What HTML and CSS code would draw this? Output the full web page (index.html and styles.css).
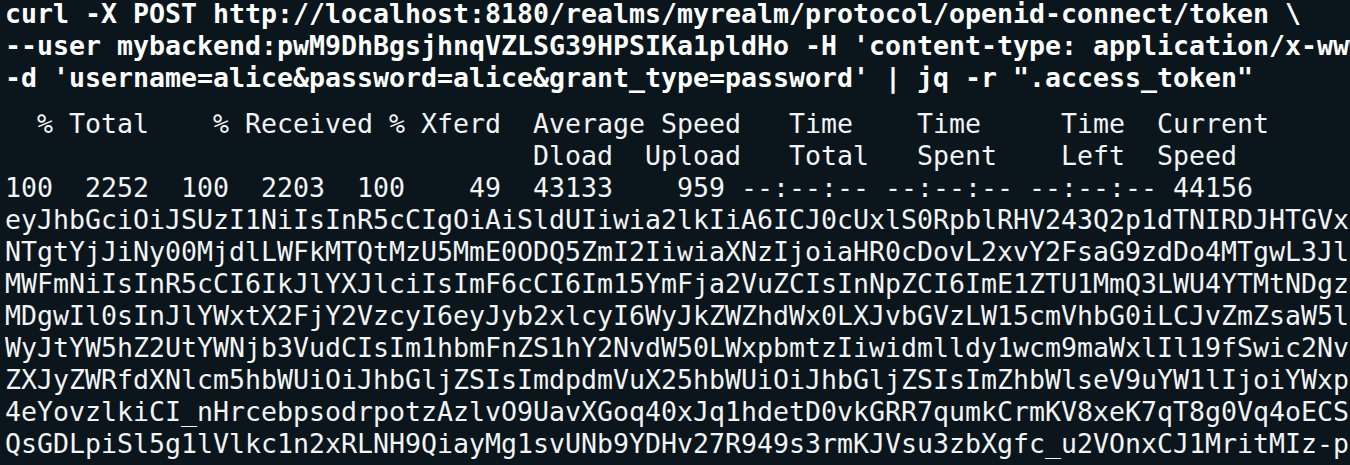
FILE: index.html
```html
<!DOCTYPE html>
<html>
<head>
<meta charset="utf-8">
<link rel="stylesheet" href="styles.css">
</head>
<body>
<main class="term">
<section class="cmd">
<div class="line">curl -X POST http://localhost:8180/realms/myrealm/protocol/openid-connect/token \</div>
<div class="line">--user mybackend:pwM9DhBgsjhnqVZLSG39HPSIKa1pldHo -H 'content-type: application/x-www-form-urlencoded' \</div>
<div class="line">-d 'username=alice&amp;password=alice&amp;grant_type=password' | jq -r ".access_token"</div>
</section>
<section class="out">
<div class="line">  % Total    % Received % Xferd  Average Speed   Time    Time     Time  Current</div>
<div class="line">                                 Dload  Upload   Total   Spent    Left  Speed</div>
<div class="line">100  2252  100  2203  100    49  43133    959 --:--:-- --:--:-- --:--:-- 44156</div>
<div class="line">eyJhbGciOiJSUzI1NiIsInR5cCIgOiAiSldUIiwia2lkIiA6ICJ0cUxlS0RpblRHV243Q2p1dTNIRDJHTGVx</div>
<div class="line">NTgtYjJiNy00MjdlLWFkMTQtMzU5MmE0ODQ5ZmI2IiwiaXNzIjoiaHR0cDovL2xvY2FsaG9zdDo4MTgwL3Jl</div>
<div class="line">MWFmNiIsInR5cCI6IkJlYXJlciIsImF6cCI6Im15YmFja2VuZCIsInNpZCI6ImE1ZTU1MmQ3LWU4YTMtNDgz</div>
<div class="line">MDgwIl0sInJlYWxtX2FjY2VzcyI6eyJyb2xlcyI6WyJkZWZhdWx0LXJvbGVzLW15cmVhbG0iLCJvZmZsaW5l</div>
<div class="line">WyJtYW5hZ2UtYWNjb3VudCIsIm1hbmFnZS1hY2NvdW50LWxpbmtzIiwidmlldy1wcm9maWxlIl19fSwic2Nv</div>
<div class="line">ZXJyZWRfdXNlcm5hbWUiOiJhbGljZSIsImdpdmVuX25hbWUiOiJhbGljZSIsImZhbWlseV9uYW1lIjoiYWxp</div>
<div class="line">4eYovzlkiCI_nHrcebpsodrpotzAzlvO9UavXGoq40xJq1hdetD0vkGRR7qumkCrmKV8xeK7qT8g0Vq4oECS</div>
<div class="line">QsGDLpiSl5g1lVlkc1n2xRLNH9QiayMg1svUNb9YDHv27R949s3rmKJVsu3zbXgfc_u2VOnxCJ1MritMIz-p</div>
</section>
</main>
</body>
</html>
```
FILE: styles.css
```css
html, body {
  margin: 0;
  padding: 0;
  background: #0a161c;
  height: 100%;
  overflow: hidden;
}

.term {
  padding-left: 5px;
  margin-top: -2px;
  font-family: "DejaVu Sans Mono", monospace;
  font-size: 26.58px;
  line-height: 32px;
  color: #ffffff;
  width: 1345px;
  overflow: hidden;
}

.line {
  white-space: pre;
  overflow: hidden;
  height: 32px;
}

.cmd {
  font-weight: bold;
  margin-bottom: 14px;
}

.out {
  color: #f2f4f5;
}
```
